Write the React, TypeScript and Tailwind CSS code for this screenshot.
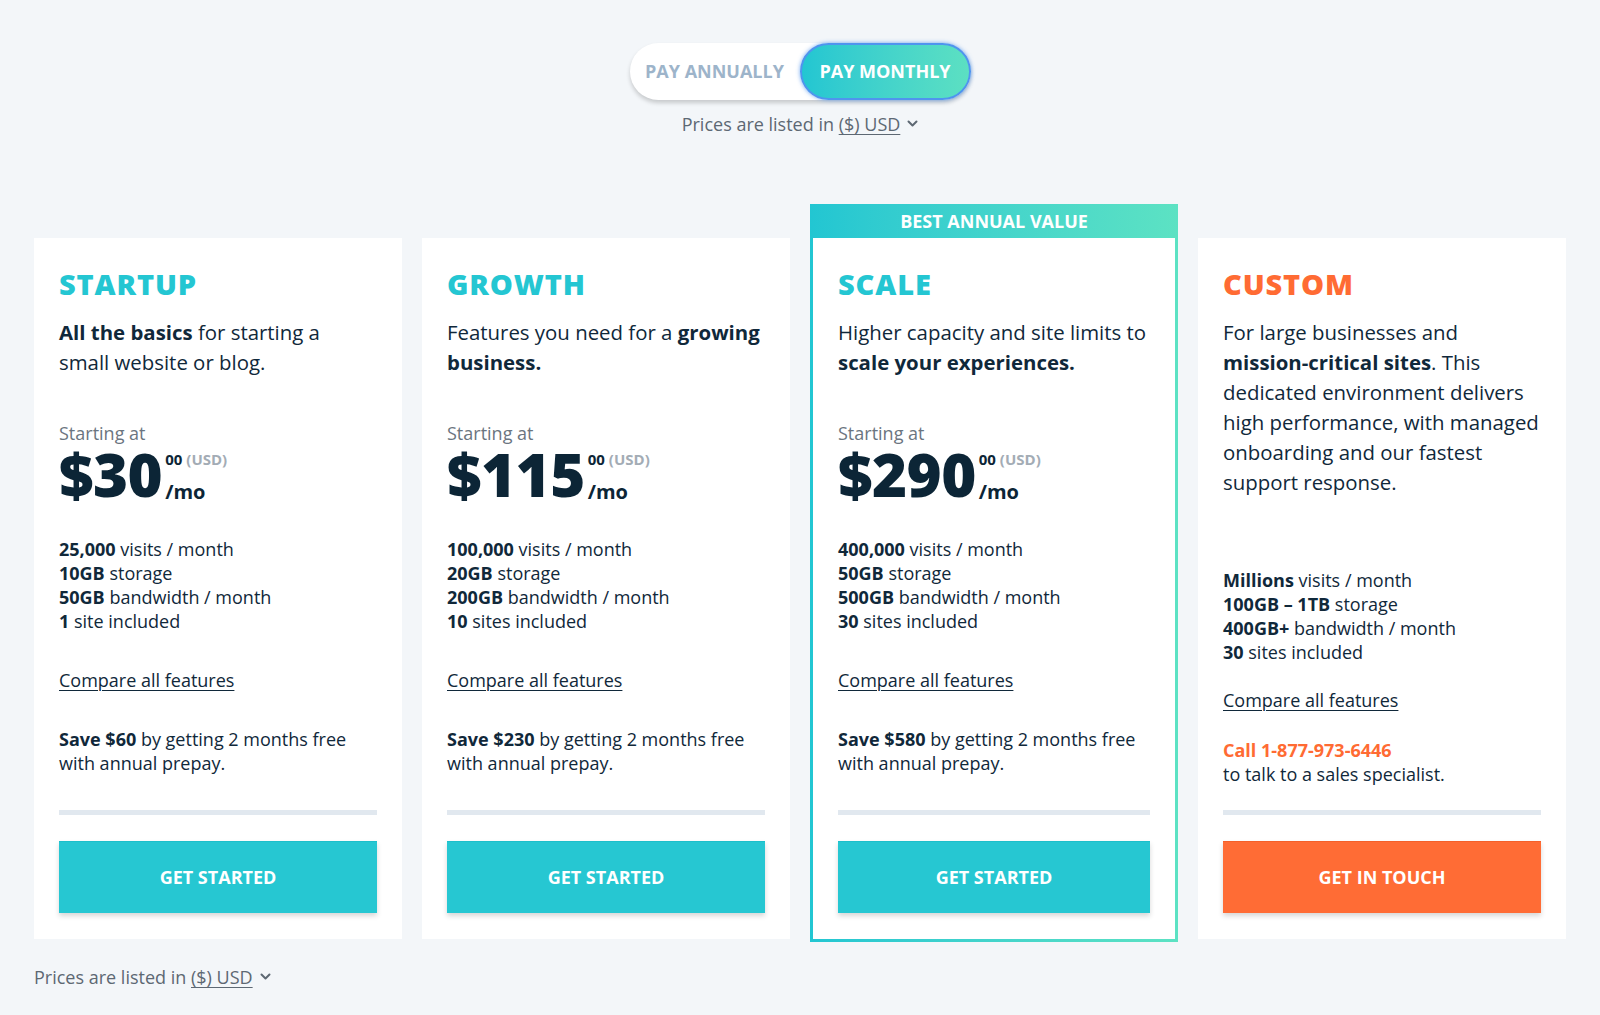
import React from "react";

type Plan = {
  name: string;
  desc: React.ReactNode;
  price?: string;
  features: [string, string][];
  save?: React.ReactNode;
  custom?: boolean;
  featured?: boolean;
};

const plans: Plan[] = [
  {
    name: "STARTUP",
    desc: (
      <>
        <span className="font-bold">All the basics</span> for starting a
        <br />
        small website or blog.
      </>
    ),
    price: "$30",
    features: [
      ["25,000", " visits / month"],
      ["10GB", " storage"],
      ["50GB", " bandwidth / month"],
      ["1", " site included"],
    ],
    save: (
      <>
        <span className="font-bold">Save $60</span> by getting 2 months free with annual prepay.
      </>
    ),
  },
  {
    name: "GROWTH",
    desc: (
      <>
        Features you need for a <span className="font-bold">growing</span>
        <br />
        <span className="font-bold">business.</span>
      </>
    ),
    price: "$115",
    features: [
      ["100,000", " visits / month"],
      ["20GB", " storage"],
      ["200GB", " bandwidth / month"],
      ["10", " sites included"],
    ],
    save: (
      <>
        <span className="font-bold">Save $230</span> by getting 2 months free with annual prepay.
      </>
    ),
  },
  {
    name: "SCALE",
    featured: true,
    desc: (
      <>
        Higher capacity and site limits to
        <br />
        <span className="font-bold">scale your experiences.</span>
      </>
    ),
    price: "$290",
    features: [
      ["400,000", " visits / month"],
      ["50GB", " storage"],
      ["500GB", " bandwidth / month"],
      ["30", " sites included"],
    ],
    save: (
      <>
        <span className="font-bold">Save $580</span> by getting 2 months free with annual prepay.
      </>
    ),
  },
  {
    name: "CUSTOM",
    custom: true,
    desc: (
      <>
        For large businesses and
        <br />
        <span className="font-bold">mission-critical sites</span>. This
        <br />
        dedicated environment delivers
        <br />
        high performance, with managed
        <br />
        onboarding and our fastest
        <br />
        support response.
      </>
    ),
    features: [
      ["Millions", " visits / month"],
      ["100GB – 1TB", " storage"],
      ["400GB+", " bandwidth / month"],
      ["30", " sites included"],
    ],
  },
];

function Chevron() {
  return (
    <svg width="11" height="8" viewBox="0 0 11 8" className="ml-[7px] inline-block">
      <path d="M1.5 1.5 L5.5 5.5 L9.5 1.5" fill="none" stroke="#5d6873" strokeWidth="2" strokeLinecap="round" strokeLinejoin="round" />
    </svg>
  );
}

function PriceNote() {
  return (
    <div className="flex items-center text-[18px] leading-[24px] text-[#5d6873]">
      <span>Prices are listed in&nbsp;</span>
      <span className="underline underline-offset-[3px] decoration-[1px]">($) USD</span>
      <Chevron />
    </div>
  );
}

function Features({ list }: { list: [string, string][] }) {
  return (
    <>
      {list.map(([b, r]) => (
        <div key={b + r}>
          <span className="font-bold">{b}</span>
          {r}
        </div>
      ))}
    </>
  );
}

function CardBody({ plan }: { plan: Plan }) {
  const titleColor = plan.custom ? "text-[#ff6b33]" : "text-[#24c6d2]";
  return (
    <div className="flex h-full flex-1 flex-col bg-white px-[25px] pb-[26px] pt-[29px] text-[#10283a]">
      <div className={`text-[29px] font-extrabold leading-[34px] tracking-[0.03em] ${titleColor}`}>{plan.name}</div>
      <div className="mt-[16px] whitespace-nowrap text-[20.4px] leading-[30px]">{plan.desc}</div>
      {plan.price ? (
        <>
          <div className="mt-[44px] text-[18px] leading-[24px] text-[#6b7580]">Starting at</div>
          <div className="flex">
            <span className="text-[60px] font-extrabold leading-[58px] tracking-[-0.01em] text-[#0c2536]">{plan.price}</span>
            <div className="ml-[3px] flex flex-col justify-between pb-[1px] pt-[7px]">
              <div className="text-[15px] font-bold leading-[15px]">
                <span className="text-[#0c2536]">00</span>
                <span className="ml-[4px] text-[#a3acb5]">(USD)</span>
              </div>
              <div className="text-[20px] font-bold leading-[20px] text-[#0c2536]">/mo</div>
            </div>
          </div>
          <div className="mt-[34px] text-[18px] leading-[24px]">
            <Features list={plan.features} />
          </div>
          <div className="mt-[35px] text-[18px] leading-[24px]">
            <span className="underline underline-offset-[3px] decoration-[1px]">Compare all features</span>
          </div>
          <div className="mt-[35px] text-[18px] leading-[24px]">{plan.save}</div>
        </>
      ) : (
        <>
          <div className="mt-[71px] text-[18px] leading-[24px]">
            <Features list={plan.features} />
          </div>
          <div className="mt-[24px] text-[18px] leading-[24px]">
            <span className="underline underline-offset-[3px] decoration-[1px]">Compare all features</span>
          </div>
          <div className="mt-[26px] text-[18px] leading-[24px]">
            <div className="font-bold text-[#ff6b33]">Call 1-877-973-6446</div>
            <div>to talk to a sales specialist.</div>
          </div>
        </>
      )}
      <div className="mt-auto pt-[24px]">
        <div className="h-[5px] bg-[#e1e8ef]" />
        <button
          className={`mt-[26px] flex h-[72px] w-full items-center justify-center text-[18px] font-bold text-white shadow-[0_3px_5px_rgba(0,0,0,0.16)] ${
            plan.custom ? "bg-[#ff6c35] border-t border-[#f4602a]" : "bg-[#26c7d2] border-t border-[#1cbfcb]"
          }`}
        >
          {plan.custom ? "GET IN TOUCH" : "GET STARTED"}
        </button>
      </div>
    </div>
  );
}

export default function App() {
  return (
    <div className="min-h-screen bg-[#f3f6f9] pb-[24px] font-['Open_Sans',sans-serif]">
      <div className="flex flex-col items-center pt-[43px]">
        <div className="flex h-[57px] w-[341px] rounded-full bg-white shadow-[0_3px_4px_rgba(0,0,0,0.18)]">
          <div className="flex w-[170px] items-center justify-center text-[18px] font-bold text-[#9db4ca]">PAY ANNUALLY</div>
          <div className="flex w-[171px] items-center justify-center rounded-full border-2 border-[#4f94ee] bg-gradient-to-r from-[#22c6d2] to-[#5ce0c2] text-[18px] font-bold text-white shadow-[0_0_4px_rgba(79,148,238,0.8)]">
            PAY MONTHLY
          </div>
        </div>
        <div className="mt-[12px]">
          <PriceNote />
        </div>
      </div>

      <div className="mt-[102px] grid grid-cols-4 gap-[20px] px-[34px]">
        {plans.map((p) =>
          p.featured ? (
            <div
              key={p.name}
              className="-mb-[3px] -mt-[34px] flex flex-col bg-gradient-to-r from-[#22c6d2] to-[#5ce2c3] px-[3px] pb-[3px]"
            >
              <div className="flex h-[34px] items-center justify-center text-[18px] font-bold text-white">BEST ANNUAL VALUE</div>
              <CardBody plan={p} />
            </div>
          ) : (
            <div key={p.name} className="flex flex-col">
              <CardBody plan={p} />
            </div>
          )
        )}
      </div>

      <div className="mt-[26px] px-[34px]">
        <PriceNote />
      </div>
    </div>
  );
}
